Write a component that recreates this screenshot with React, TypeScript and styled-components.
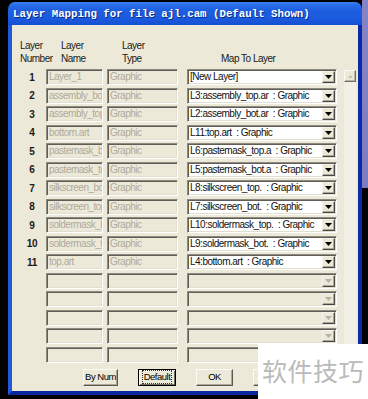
import * as React from 'react';
import styled, { createGlobalStyle } from 'styled-components';

const GlobalStyle = createGlobalStyle`
  html, body {
    margin: 0;
    padding: 0;
    background: #020204;
  }
  body {
    font-family: "Liberation Sans", Arial, sans-serif;
  }
`;

interface LayerRow {
  name: string;
  type: string;
  map: string | null;
}

const ROWS: LayerRow[] = [
  { name: 'Layer_1', type: 'Graphic', map: '[New Layer]' },
  { name: 'assembly_bot.art', type: 'Graphic', map: 'L3:assembly_top.ar  : Graphic' },
  { name: 'assembly_top.art', type: 'Graphic', map: 'L2:assembly_bot.ar  : Graphic' },
  { name: 'bottom.art', type: 'Graphic', map: 'L11:top.art  : Graphic' },
  { name: 'pastemask_bot.art', type: 'Graphic', map: 'L6:pastemask_top.a  : Graphic' },
  { name: 'pastemask_top.art', type: 'Graphic', map: 'L5:pastemask_bot.a  : Graphic' },
  { name: 'silkscreen_bot.art', type: 'Graphic', map: 'L8:silkscreen_top.  : Graphic' },
  { name: 'silkscreen_top.art', type: 'Graphic', map: 'L7:silkscreen_bot.  : Graphic' },
  { name: 'soldermask_bot.art', type: 'Graphic', map: 'L10:soldermask_top.  : Graphic' },
  { name: 'soldermask_top.art', type: 'Graphic', map: 'L9:soldermask_bot.  : Graphic' },
  { name: 'top.art', type: 'Graphic', map: 'L4:bottom.art  : Graphic' },
  { name: '', type: '', map: null },
  { name: '', type: '', map: null },
  { name: '', type: '', map: null },
  { name: '', type: '', map: null },
  { name: '', type: '', map: null },
];

const DropArrow = ({ disabled }: { disabled?: boolean }) => (
  <svg width="7" height="4" viewBox="0 0 7 4">
    <path d="M0 0h7L3.5 4z" fill={disabled ? '#b5b2a4' : '#000'} />
  </svg>
);

const UpArrow = () => (
  <svg width="5" height="3" viewBox="0 0 5 3">
    <path d="M0 3h5L2.5 0z" fill="#c4c1b4" />
  </svg>
);

const App: React.FC = () => (
  <>
    <GlobalStyle />
    <Desktop>
      <Window>
        <TitleBar>Layer Mapping for file ajl.cam (Default Shown)</TitleBar>
        <Client>
          <HeaderGrid>
            <HeaderCell indent={2}>{'Layer\nNumber'}</HeaderCell>
            <HeaderCell indent={15}>{'Layer\nName'}</HeaderCell>
            <HeaderCell indent={15}>{'Layer\nType'}</HeaderCell>
            <HeaderCell indent={34}>Map To Layer</HeaderCell>
          </HeaderGrid>

          <TableWrap>
            <RowsGrid>
              {ROWS.map((row, i) => (
                <React.Fragment key={i}>
                  <NumberCell>{row.map ? i + 1 : ''}</NumberCell>
                  <Cell>
                    <TextBox width={57}>{row.name}</TextBox>
                  </Cell>
                  <Cell>
                    <TextBox width={71}>{row.type}</TextBox>
                  </Cell>
                  <Combo disabled={!row.map}>
                    <ComboText>{row.map}</ComboText>
                    <ComboButton>
                      <DropArrow disabled={!row.map} />
                    </ComboButton>
                  </Combo>
                </React.Fragment>
              ))}
            </RowsGrid>
            <ScrollTrack>
              <ScrollButton>
                <UpArrow />
              </ScrollButton>
            </ScrollTrack>
          </TableWrap>

          <ButtonRow>
            <Button width={35}>By Num</Button>
            <Button width={38} isDefault>
              <FocusRing>Default</FocusRing>
            </Button>
            <Button width={37}>OK</Button>
            <Button width={37}>Cancel</Button>
          </ButtonRow>
        </Client>
      </Window>
      <Watermark>软件技巧</Watermark>
    </Desktop>
  </>
);

export default App;

const Desktop = styled.div`
  position: relative;
  width: 368px;
  height: 399px;
  box-sizing: border-box;
  padding: 2px 6px 0 8px;
  overflow: hidden;
  background: linear-gradient(#8585c6, #7c7cc0) right top / 6px 188px no-repeat, #020204;
`;

const Window = styled.div`
  display: flex;
  flex-direction: column;
  width: 354px;
  height: 393px;
`;

const TitleBar = styled.div`
  height: 23px;
  flex: none;
  box-sizing: border-box;
  padding: 4px 0 0 5px;
  border-radius: 7px 7px 0 0;
  background: linear-gradient(
    to bottom,
    #3a84f2 0%,
    #2a6fe8 12%,
    #1d5fe0 35%,
    #1b5ade 70%,
    #1650d2 100%
  );
  color: #fff;
  font-family: "Liberation Mono", "DejaVu Sans Mono", monospace;
  font-weight: bold;
  font-size: 10.75px;
  line-height: 17px;
  white-space: pre;
  text-shadow: 1px 1px 0 #0b2c8a;
`;

const Client = styled.div`
  flex: 1;
  display: flex;
  flex-direction: column;
  box-sizing: border-box;
  background: #ece9d8;
  border-left: 4px solid #2158dc;
  border-right: 4px solid #0c2aa6;
  border-bottom: 4px solid #0b27a0;
  padding: 14px 0 0 6px;
  font-size: 10px;
  letter-spacing: -0.5px;
  color: #000;
`;

const HeaderGrid = styled.div`
  display: grid;
  grid-template-columns: 28px 61px 80px 150px;
  height: 26px;
  margin-bottom: 4px;
`;

const HeaderCell = styled.div<{ indent: number }>`
  align-self: end;
  padding-left: ${(p) => p.indent}px;
  white-space: pre;
  line-height: 13px;
  color: #1a1a1a;
`;

const TableWrap = styled.div`
  display: flex;
  gap: 7px;
`;

const RowsGrid = styled.div`
  display: grid;
  grid-template-columns: 28px 61px 80px 150px;
  grid-auto-rows: 16px;
  row-gap: 2.5px;
`;

const NumberCell = styled.div`
  display: flex;
  align-items: center;
  justify-content: center;
  font-weight: bold;
  font-size: 10px;
  letter-spacing: -0.2px;
  color: #1a1a1a;
`;

const Cell = styled.div`
  display: flex;
`;

const sunken = `
  box-sizing: border-box;
  border-style: solid;
  border-width: 1px;
  border-color: #8d8b80 #ffffff #ffffff #8d8b80;
  box-shadow: inset 1px 1px 0 #5f5d55, inset -1px -1px 0 #e2dfd0;
`;

const TextBox = styled.div<{ width: number }>`
  ${sunken}
  width: ${(p) => p.width}px;
  height: 16px;
  padding: 0 0 0 2px;
  background: #ece9d8;
  color: #aeaa9b;
  line-height: 14px;
  white-space: nowrap;
  overflow: hidden;
`;

const Combo = styled.div<{ disabled?: boolean }>`
  ${sunken}
  display: flex;
  width: 150px;
  height: 16px;
  padding: 1px 1px 1px 2px;
  background: ${(p) => (p.disabled ? '#ece9d8' : '#ffffff')};
`;

const ComboText = styled.div`
  flex: 1;
  min-width: 0;
  line-height: 12px;
  white-space: pre;
  overflow: hidden;
  color: #111;
`;

const ComboButton = styled.div`
  box-sizing: border-box;
  width: 13px;
  height: 12px;
  display: flex;
  align-items: center;
  justify-content: center;
  background: #ece9d8;
  border-style: solid;
  border-width: 1px;
  border-color: #f4f2e8 #4a4842 #4a4842 #f4f2e8;
  box-shadow: inset -1px -1px 0 #aca899;
`;

const ScrollTrack = styled.div`
  width: 12px;
  margin-top: 1px;
  height: 292px;
  background: #f2f0e6;
`;

const ScrollButton = styled.div`
  box-sizing: border-box;
  width: 12px;
  height: 12px;
  display: flex;
  align-items: center;
  justify-content: center;
  background: #ece9d8;
  border-style: solid;
  border-width: 1px;
  border-color: #faf9f4 #6f6d64 #6f6d64 #faf9f4;
  box-shadow: inset -1px -1px 0 #b8b5a7;
`;

const ButtonRow = styled.div`
  display: flex;
  gap: 20px;
  margin-top: 6px;
  padding-left: 65px;
`;

const Button = styled.div<{ width: number; isDefault?: boolean }>`
  box-sizing: border-box;
  width: ${(p) => p.width}px;
  height: 17px;
  display: flex;
  align-items: center;
  justify-content: center;
  background: #ece9d8;
  border-style: solid;
  border-width: 1px;
  border-color: ${(p) =>
    p.isDefault ? '#000 #000 #000 #000' : '#fbfaf5 #5a5850 #5a5850 #fbfaf5'};
  box-shadow: ${(p) =>
    p.isDefault
      ? 'inset 1px 1px 0 #fbfaf5, inset -1px -1px 0 #6e6c63'
      : 'inset -1px -1px 0 #aca899'};
  font-size: 9.5px;
  letter-spacing: -0.5px;
  line-height: 12px;
  white-space: nowrap;
`;

const FocusRing = styled.span`
  padding: 0 1px;
  outline: 1px dotted #333;
  outline-offset: 0;
`;

const Watermark = styled.div`
  position: absolute;
  right: 0;
  bottom: 0;
  width: 110px;
  height: 55px;
  box-sizing: border-box;
  padding: 11px 0 0 4px;
  background: #fff;
  color: #bababa;
  font-family: "Noto Sans CJK SC", sans-serif;
  font-size: 25px;
  line-height: 30px;
  letter-spacing: 0.5px;
  white-space: nowrap;
`;
